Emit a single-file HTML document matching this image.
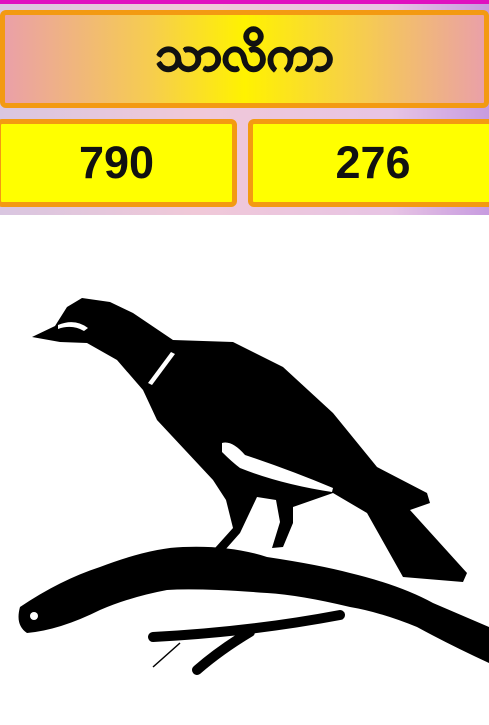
<!DOCTYPE html>
<html><head><meta charset="utf-8"><style>
html,body{margin:0;padding:0;width:489px;height:725px;overflow:hidden;background:#fff;font-family:"Liberation Sans",sans-serif}
.band{position:absolute;left:0;top:0;width:489px;height:215px;background:linear-gradient(90deg,#d9c6e0,#f0c8d8 40%,#e7c4e4 80%,#c79be0)}
.top{position:absolute;left:0;top:0;width:489px;height:4px;background:#e010c0}
.hdr{position:absolute;left:0;top:10px;width:479px;height:88px;border:5px solid #f39a12;border-radius:6px;background:linear-gradient(90deg,#eaa0a8,#f6cc50 30%,#fff200 50%,#f6cc50 75%,#eaa0a8);display:flex;align-items:center;justify-content:center;font-size:48px;font-weight:bold;color:#111;text-shadow:1px 0 0 #111,-1px 0 0 #111,0 1px 0 #111,0 -1px 0 #111}
.box{position:absolute;top:119px;height:78px;border:5px solid #f39a12;border-radius:6px;background:#ffff00;display:flex;align-items:center;justify-content:center;font-size:45px;font-weight:bold;color:#111}
</style></head><body>
<div class="band"></div><div class="top"></div>
<div class="hdr">သာလိကာ</div>
<div class="box" style="left:-4px;width:231px">790</div>
<div class="box" style="left:248px;width:240px">276</div>
<svg style="position:absolute;left:0;top:0" width="489" height="725" viewBox="0 0 489 725">
<path fill="#000" d="M32,337 L55,326 L67,307 L82,298 L110,302 L133,313 L173,340 L233,342 L283,367 L333,413 L377,467 L427,493 L430,503 L410,510 L467,573 L463,582 L403,577 L367,513 L333,493 L293,507 L293,523 L283,547 L272,548 L280,522 L276,500 L257,497 L240,533 L225,550 L215,548 L233,528 L226,500 L213,480 L157,420 L143,390 L117,360 L87,343 L60,342 Z"/>
<path fill="#fff" d="M58,325 Q75,318 88,328 L84,331 Q72,324 58,329 Z"/>
<path fill="#fff" d="M171,352 L175,354 L152,385 L148,383 Z"/>
<path fill="#fff" d="M222,443 Q232,440 245,455 Q290,470 333,488 L332,492 Q280,484 240,468 Q232,462 222,452 Z"/>
<path fill="#000" d="M20,607 Q60,580 100,567 Q150,548 183,547 Q230,545 267,557 Q320,565 350,573 Q400,585 433,603 L489,627 L489,663 Q450,645 417,627 Q380,612 350,607 Q300,595 267,593 Q200,588 167,590 Q130,597 100,610 Q60,630 27,633 Q15,625 20,607 Z"/>
<path fill="none" stroke="#000" stroke-width="10" stroke-linecap="round" d="M340,615 Q250,632 153,637 M250,632 Q220,650 197,670"/>
<path fill="none" stroke="#000" stroke-width="1.5" d="M153,667 L180,643"/>
<circle cx="34" cy="616" r="4" fill="#fff"/>
</svg>
</body></html>
